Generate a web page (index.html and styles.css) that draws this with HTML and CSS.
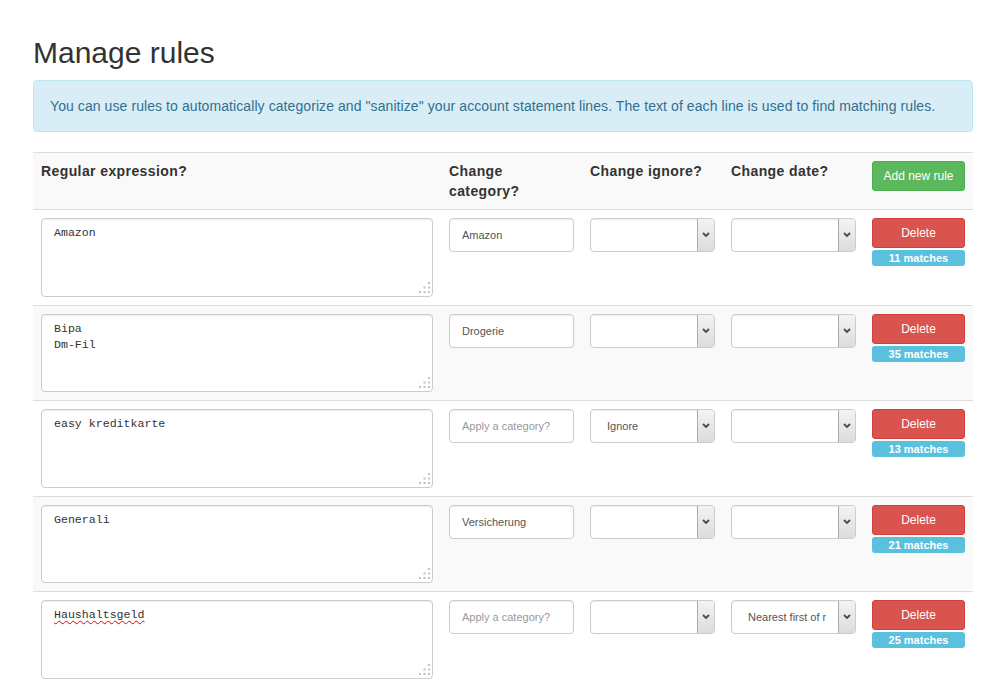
FILE: index.html
```html
<!DOCTYPE html>
<html lang="en">
<head>
<meta charset="utf-8">
<title>Manage rules</title>
<link rel="stylesheet" href="styles.css">
</head>
<body>
<div class="container">
  <h1 class="title">Manage rules</h1>
  <div class="alert">You can use rules to automatically categorize and "sanitize" your account statement lines. The text of each line is used to find matching rules.</div>
  <table class="rules">
    <colgroup>
      <col class="c-regex"><col class="c-cat"><col class="c-ign"><col class="c-date"><col class="c-act">
    </colgroup>
    <tbody>
      <tr class="head">
        <th>Regular expression?</th>
        <th>Change category?</th>
        <th>Change ignore?</th>
        <th>Change date?</th>
        <th><button class="btn btn-success">Add new rule</button></th>
      </tr>
      <tr>
        <td><div class="ta-wrap"><textarea class="form-control regex" spellcheck="false">Amazon</textarea><svg class="grip" width="11" height="11" viewBox="0 0 11 11"><rect x="9" y="0" width="2" height="2"/><rect x="4.5" y="4.5" width="2" height="2"/><rect x="9" y="4.5" width="2" height="2"/><rect x="0" y="9" width="2" height="2"/><rect x="4.5" y="9" width="2" height="2"/><rect x="9" y="9" width="2" height="2"/></svg></div></td>
        <td><input class="form-control" type="text" value="Amazon" placeholder="Apply a category?"></td>
        <td><div class="sel-wrap"><select class="form-control"><option></option><option>Ignore</option></select><span class="sel-arrow"><svg width="8" height="6" viewBox="0 0 8 6"><path d="M1 1 L4 4 L7 1" fill="none" stroke="#4a4a4a" stroke-width="1.8"/></svg></span></div></td>
        <td><div class="sel-wrap"><select class="form-control"><option></option><option>Nearest first of month</option></select><span class="sel-arrow"><svg width="8" height="6" viewBox="0 0 8 6"><path d="M1 1 L4 4 L7 1" fill="none" stroke="#4a4a4a" stroke-width="1.8"/></svg></span></div></td>
        <td><button class="btn btn-danger">Delete</button><span class="badge">11 matches</span></td>
      </tr>
      <tr>
        <td><div class="ta-wrap"><textarea class="form-control regex" spellcheck="false">Bipa
Dm-Fil</textarea><svg class="grip" width="11" height="11" viewBox="0 0 11 11"><rect x="9" y="0" width="2" height="2"/><rect x="4.5" y="4.5" width="2" height="2"/><rect x="9" y="4.5" width="2" height="2"/><rect x="0" y="9" width="2" height="2"/><rect x="4.5" y="9" width="2" height="2"/><rect x="9" y="9" width="2" height="2"/></svg></div></td>
        <td><input class="form-control" type="text" value="Drogerie" placeholder="Apply a category?"></td>
        <td><div class="sel-wrap"><select class="form-control"><option></option><option>Ignore</option></select><span class="sel-arrow"><svg width="8" height="6" viewBox="0 0 8 6"><path d="M1 1 L4 4 L7 1" fill="none" stroke="#4a4a4a" stroke-width="1.8"/></svg></span></div></td>
        <td><div class="sel-wrap"><select class="form-control"><option></option><option>Nearest first of month</option></select><span class="sel-arrow"><svg width="8" height="6" viewBox="0 0 8 6"><path d="M1 1 L4 4 L7 1" fill="none" stroke="#4a4a4a" stroke-width="1.8"/></svg></span></div></td>
        <td><button class="btn btn-danger">Delete</button><span class="badge">35 matches</span></td>
      </tr>
      <tr>
        <td><div class="ta-wrap"><textarea class="form-control regex" spellcheck="false">easy kreditkarte</textarea><svg class="grip" width="11" height="11" viewBox="0 0 11 11"><rect x="9" y="0" width="2" height="2"/><rect x="4.5" y="4.5" width="2" height="2"/><rect x="9" y="4.5" width="2" height="2"/><rect x="0" y="9" width="2" height="2"/><rect x="4.5" y="9" width="2" height="2"/><rect x="9" y="9" width="2" height="2"/></svg></div></td>
        <td><input class="form-control" type="text" value="" placeholder="Apply a category?"></td>
        <td><div class="sel-wrap"><select class="form-control"><option>Ignore</option><option></option></select><span class="sel-arrow"><svg width="8" height="6" viewBox="0 0 8 6"><path d="M1 1 L4 4 L7 1" fill="none" stroke="#4a4a4a" stroke-width="1.8"/></svg></span></div></td>
        <td><div class="sel-wrap"><select class="form-control"><option></option><option>Nearest first of month</option></select><span class="sel-arrow"><svg width="8" height="6" viewBox="0 0 8 6"><path d="M1 1 L4 4 L7 1" fill="none" stroke="#4a4a4a" stroke-width="1.8"/></svg></span></div></td>
        <td><button class="btn btn-danger">Delete</button><span class="badge">13 matches</span></td>
      </tr>
      <tr>
        <td><div class="ta-wrap"><textarea class="form-control regex" spellcheck="false">Generali</textarea><svg class="grip" width="11" height="11" viewBox="0 0 11 11"><rect x="9" y="0" width="2" height="2"/><rect x="4.5" y="4.5" width="2" height="2"/><rect x="9" y="4.5" width="2" height="2"/><rect x="0" y="9" width="2" height="2"/><rect x="4.5" y="9" width="2" height="2"/><rect x="9" y="9" width="2" height="2"/></svg></div></td>
        <td><input class="form-control" type="text" value="Versicherung" placeholder="Apply a category?"></td>
        <td><div class="sel-wrap"><select class="form-control"><option></option><option>Ignore</option></select><span class="sel-arrow"><svg width="8" height="6" viewBox="0 0 8 6"><path d="M1 1 L4 4 L7 1" fill="none" stroke="#4a4a4a" stroke-width="1.8"/></svg></span></div></td>
        <td><div class="sel-wrap"><select class="form-control"><option></option><option>Nearest first of month</option></select><span class="sel-arrow"><svg width="8" height="6" viewBox="0 0 8 6"><path d="M1 1 L4 4 L7 1" fill="none" stroke="#4a4a4a" stroke-width="1.8"/></svg></span></div></td>
        <td><button class="btn btn-danger">Delete</button><span class="badge">21 matches</span></td>
      </tr>
      <tr>
        <td><div class="ta-wrap"><textarea class="form-control regex misspelled" spellcheck="false">Haushaltsgeld</textarea><svg class="grip" width="11" height="11" viewBox="0 0 11 11"><rect x="9" y="0" width="2" height="2"/><rect x="4.5" y="4.5" width="2" height="2"/><rect x="9" y="4.5" width="2" height="2"/><rect x="0" y="9" width="2" height="2"/><rect x="4.5" y="9" width="2" height="2"/><rect x="9" y="9" width="2" height="2"/></svg></div></td>
        <td><input class="form-control" type="text" value="" placeholder="Apply a category?"></td>
        <td><div class="sel-wrap"><select class="form-control"><option></option><option>Ignore</option></select><span class="sel-arrow"><svg width="8" height="6" viewBox="0 0 8 6"><path d="M1 1 L4 4 L7 1" fill="none" stroke="#4a4a4a" stroke-width="1.8"/></svg></span></div></td>
        <td><div class="sel-wrap"><select class="form-control"><option>Nearest first of month</option><option></option></select><span class="sel-arrow"><svg width="8" height="6" viewBox="0 0 8 6"><path d="M1 1 L4 4 L7 1" fill="none" stroke="#4a4a4a" stroke-width="1.8"/></svg></span></div></td>
        <td><button class="btn btn-danger">Delete</button><span class="badge">25 matches</span></td>
      </tr>
    </tbody>
  </table>
</div>
</body>
</html>
```
FILE: styles.css
```css
html, body {
  margin: 0;
  padding: 0;
  background: #fff;
}
body {
  font-family: "Liberation Sans", Arial, sans-serif;
  font-size: 14px;
  line-height: 20px;
  color: #333;
}
.container {
  width: 940px;
  margin-left: 33px;
  padding-top: 36px;
}
.title {
  font-size: 30px;
  font-weight: normal;
  line-height: 33px;
  margin: 0 0 11px;
  color: #333;
}
.alert {
  padding: 15px 16px;
  border: 1px solid #bce8f1;
  background: #d9edf7;
  color: #31708f;
  border-radius: 4px;
  margin-bottom: 20px;
  font-size: 14px;
  letter-spacing: 0.08px;
  line-height: 20px;
}
.rules {
  width: 940px;
  border-collapse: collapse;
  border-spacing: 0;
  table-layout: fixed;
}
.c-regex { width: 408px; }
.c-cat { width: 141px; }
.c-ign { width: 141px; }
.c-date { width: 141px; }
.c-act { width: 109px; }
.rules th, .rules td {
  padding: 8px;
  vertical-align: top;
  text-align: left;
  border-top: 1px solid #ddd;
}
.rules tr:nth-child(odd) {
  background: #f9f9f9;
}
.rules th {
  font-weight: bold;
  font-size: 14px;
  letter-spacing: 0.4px;
  line-height: 20px;
  color: #333;
}
.form-control {
  display: block;
  box-sizing: border-box;
  width: 100%;
  height: 34px;
  margin: 0;
  padding: 6px 12px;
  font-family: "Liberation Sans", Arial, sans-serif;
  font-size: 11px;
  line-height: 20px;
  color: #555;
  background: #fff;
  border: 1px solid #ccc;
  border-radius: 4px;
  box-shadow: inset 0 1px 1px rgba(0,0,0,.075);
  outline: none;
}
.form-control::placeholder {
  color: #999;
}
.ta-wrap {
  position: relative;
}
textarea.regex {
  height: 78.5px;
  font-family: "Liberation Mono", "Courier New", monospace;
  font-size: 11.6px;
  line-height: 16px;
  padding: 6px 12px;
  resize: none;
  overflow: hidden;
  color: #333;
}
textarea.misspelled {
  text-decoration: underline wavy #e00;
  text-decoration-thickness: 1px;
  text-underline-offset: 2px;
}
.grip {
  position: absolute;
  right: 3px;
  bottom: 4px;
  fill: #c2c2c2;
}
.sel-wrap {
  position: relative;
}
.sel-wrap select {
  -webkit-appearance: none;
  appearance: none;
  padding: 6px 29px 6px 16px;
}
.sel-arrow {
  position: absolute;
  top: 1px;
  right: 1px;
  bottom: 1px;
  width: 17px;
  box-sizing: border-box;
  border-left: 1px solid #ababab;
  background: linear-gradient(#f3f3f3, #dcdcdc);
  border-radius: 0 3px 3px 0;
  display: flex;
  align-items: center;
  justify-content: center;
  pointer-events: none;
}
.btn {
  display: block;
  box-sizing: border-box;
  width: 100%;
  height: 30px;
  margin: 0;
  padding: 5px 10px;
  font-family: "Liberation Sans", Arial, sans-serif;
  font-size: 12px;
  font-weight: normal;
  letter-spacing: 0;
  line-height: 18px;
  color: #fff;
  text-align: center;
  border: 1px solid transparent;
  border-radius: 3px;
}
.btn-success {
  background: #5cb85c;
  border-color: #4cae4c;
}
.btn-danger {
  background: #d9534f;
  border-color: #d43f3a;
}
.badge {
  display: block;
  margin-top: 2px;
  height: 16px;
  line-height: 16px;
  background: #5bc0de;
  color: #fff;
  font-size: 11px;
  font-weight: bold;
  text-align: center;
  border-radius: 3px;
}
```
